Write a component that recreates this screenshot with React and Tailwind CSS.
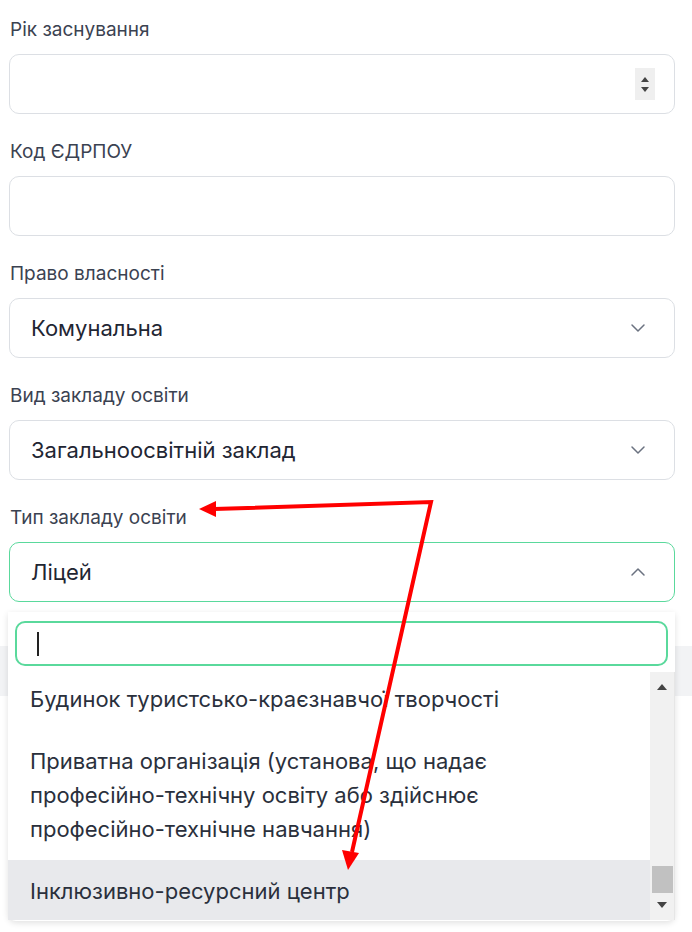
import { ChevronDown, ChevronUp } from 'lucide-react'

function Label({ children }) {
  return <div className="text-[19px] leading-[22px] text-[#3b4251] pl-[1px]">{children}</div>
}

function SelectBox({ value, open }) {
  return (
    <div
      className={`h-[60px] rounded-[10px] border bg-white flex items-center justify-between pl-[21px] pr-[24px] ${
        open ? 'border-[#5ad99c]' : 'border-[#dcdfe4]'
      }`}
    >
      <span className="text-[22px] text-[#1f2633]">{value}</span>
      {open ? (
        <ChevronUp size={24} strokeWidth={1.5} className="text-[#6b7280]" />
      ) : (
        <ChevronDown size={24} strokeWidth={1.5} className="text-[#6b7280]" />
      )}
    </div>
  )
}

function Option({ children, active }) {
  return (
    <div className={`px-[22px] py-[14px] text-[22px] leading-[34px] text-[#2a303c] ${active ? 'bg-[#e8e9ec]' : ''}`}>
      {children}
    </div>
  )
}

export default function App() {
  return (
    <div className="relative w-[692px] h-[932px] overflow-hidden bg-white font-['Inter',sans-serif]">
      <div className="flex flex-col gap-[27px] px-[9px] pt-[19px] w-[684px]">
        <div className="flex flex-col gap-[13px]">
          <Label>Рік заснування</Label>
          <div className="h-[60px] rounded-[10px] border border-[#dcdfe4] bg-white flex items-center justify-end pr-[19px]">
            <div className="w-[20px] h-[32px] bg-[#efefef] flex flex-col items-center justify-center gap-[5px]">
              <span className="w-0 h-0 border-x-[4px] border-x-transparent border-b-[5px] border-b-[#444]" />
              <span className="w-0 h-0 border-x-[4px] border-x-transparent border-t-[5px] border-t-[#444]" />
            </div>
          </div>
        </div>
        <div className="flex flex-col gap-[13px]">
          <Label>Код ЄДРПОУ</Label>
          <div className="h-[60px] rounded-[10px] border border-[#dcdfe4] bg-white" />
        </div>
        <div className="flex flex-col gap-[13px]">
          <Label>Право власності</Label>
          <SelectBox value="Комунальна" />
        </div>
        <div className="flex flex-col gap-[13px]">
          <Label>Вид закладу освіти</Label>
          <SelectBox value="Загальноосвітній заклад" />
        </div>
        <div className="flex flex-col gap-[13px]">
          <Label>Тип закладу освіти</Label>
          <SelectBox value="Ліцей" open />
        </div>
      </div>

      {/* page content behind the open dropdown */}
      <div className="mt-[44px] h-[50px] bg-[#f2f3f5]" />

      {/* dropdown */}
      <div className="absolute left-[8px] top-[612px] w-[667px] h-[309px] bg-white rounded-b-[8px] shadow-[0_2px_6px_rgba(0,0,0,0.12)] flex flex-col">
        <div className="px-[7px] pt-[9px]">
          <div className="h-[45px] rounded-[10px] border-2 border-[#5ad99c] flex items-center pl-[20px]">
            <span className="w-[1.5px] h-[24px] bg-[#222]" />
          </div>
        </div>
        <div className="mt-[6px] flex h-[248px] overflow-hidden">
          <div className="flex-1 flex flex-col -mt-[4px]">
            <Option>Будинок туристсько-краєзнавчої творчості</Option>
            <Option>
              Приватна організація (установа, що надає
              <br />
              професійно-технічну освіту або здійснює
              <br />
              професійно-технічне навчання)
            </Option>
            <Option active>Інклюзивно-ресурсний центр</Option>
          </div>
          <div className="w-[25px] bg-[#f1f1f1] flex flex-col items-center justify-between py-[12px] border-r border-[#e6e6e6]">
            <span className="w-0 h-0 border-x-[5px] border-x-transparent border-b-[6px] border-b-[#444]" />
            <div className="flex flex-col items-center gap-[9px]">
              <div className="w-[21px] h-[27px] bg-[#c1c1c1]" />
              <span className="w-0 h-0 border-x-[5px] border-x-transparent border-t-[6px] border-t-[#444]" />
            </div>
          </div>
        </div>
      </div>

      {/* annotation arrows */}
      <svg className="absolute inset-0 pointer-events-none" width="692" height="932">
        <polyline points="214,509 431,502 352,852" fill="none" stroke="#ff0000" strokeWidth="4" strokeLinejoin="miter" />
        <polygon points="199,509 216,501 216,517" fill="#ff0000" />
        <polygon points="348,870 342,850 359,853" fill="#ff0000" />
      </svg>
    </div>
  )
}
